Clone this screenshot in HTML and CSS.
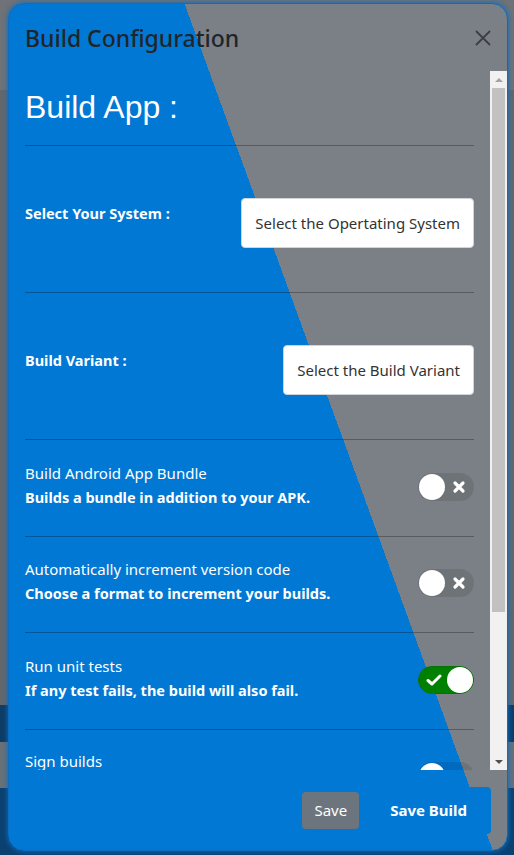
FILE: index.html
```html
<!DOCTYPE html>
<html lang="en">
<head>
<meta charset="utf-8">
<title>Build Configuration</title>
<link rel="stylesheet" href="styles.css">
</head>
<body>
  <div class="modal">
    <div class="modal-header">
      <h4 class="modal-title">Build Configuration</h4>
      <button class="close-btn" aria-label="Close">
        <svg width="16" height="16" viewBox="0 0 16 16"><path d="M1 1L15 15M15 1L1 15" stroke="#3b3f44" stroke-width="1.8" fill="none"/></svg>
      </button>
    </div>
    <div class="modal-body">
      <div class="body-content">
        <h1 class="app-title">Build App :</h1>

        <div class="row select-row">
          <span class="label">Select Your System :</span>
          <div class="select select-os">Select the Opertating System</div>
        </div>

        <div class="row select-row">
          <span class="label">Build Variant :</span>
          <div class="select select-variant">Select the Build Variant</div>
        </div>

        <div class="row toggle-row">
          <div class="text">
            <div class="title">Build Android App Bundle</div>
            <div class="desc">Builds a bundle in addition to your APK.</div>
          </div>
          <div class="toggle off">
            <span class="knob"></span>
            <svg class="icon-x" width="14" height="14" viewBox="0 0 14 14"><path d="M3 3L11 11M11 3L3 11" stroke="#fff" stroke-width="3.2" stroke-linecap="round"/></svg>
          </div>
        </div>

        <div class="row toggle-row">
          <div class="text">
            <div class="title">Automatically increment version code</div>
            <div class="desc">Choose a format to increment your builds.</div>
          </div>
          <div class="toggle off">
            <span class="knob"></span>
            <svg class="icon-x" width="14" height="14" viewBox="0 0 14 14"><path d="M3 3L11 11M11 3L3 11" stroke="#fff" stroke-width="3.2" stroke-linecap="round"/></svg>
          </div>
        </div>

        <div class="row toggle-row">
          <div class="text">
            <div class="title">Run unit tests</div>
            <div class="desc">If any test fails, the build will also fail.</div>
          </div>
          <div class="toggle on">
            <svg class="icon-check" width="16" height="12" viewBox="0 0 16 12"><path d="M2 6.5L6 10L14 2" stroke="#fff" stroke-width="3" fill="none" stroke-linecap="round" stroke-linejoin="round"/></svg>
            <span class="knob"></span>
          </div>
        </div>

        <div class="row toggle-row last-row">
          <div class="text">
            <div class="title">Sign builds</div>
          </div>
          <div class="toggle off">
            <span class="knob"></span>
            <svg class="icon-x" width="14" height="14" viewBox="0 0 14 14"><path d="M3 3L11 11M11 3L3 11" stroke="#fff" stroke-width="3.2" stroke-linecap="round"/></svg>
          </div>
        </div>
      </div>
      <div class="scrollbar" aria-hidden="true">
        <div class="sb-btn">
          <svg width="8" height="4" viewBox="0 0 8 4"><polygon points="0,4 8,4 4,0" fill="#a3a3a3"/></svg>
        </div>
        <div class="sb-track">
          <div class="sb-thumb"></div>
        </div>
        <div class="sb-btn">
          <svg width="8" height="4" viewBox="0 0 8 4"><polygon points="0,0 8,0 4,4" fill="#505050"/></svg>
        </div>
      </div>
    </div>
    <div class="modal-footer">
      <button class="btn btn-save">Save</button>
      <button class="btn btn-build">Save Build</button>
    </div>
  </div>
</body>
</html>
```
FILE: styles.css
```css
* { box-sizing: border-box; }

html, body { margin: 0; padding: 0; }

body {
  width: 514px;
  height: 855px;
  overflow: hidden;
  font-family: "Noto Sans", "Open Sans", sans-serif;
  background: linear-gradient(to bottom,
    #6f7276 0 90px,
    #63676b 90px 705px,
    #0d3d66 705px 742px,
    #687078 742px 788px,
    #0b4170 788px);
}

.modal {
  width: 500px;
  height: 848px;
  margin: 3px 0 0 8px;
  border: 1px solid #0b6cc0;
  border-radius: 16px;
  box-shadow: 0 0 4px 1px rgba(10, 110, 200, 0.8);
  background: linear-gradient(70deg, #0078d4 60%, #7b8086 60%);
  display: flex;
  flex-direction: column;
  overflow: hidden;
}

/* Header */
.modal-header {
  height: 67px;
  flex: none;
  padding: 0 16px;
  display: flex;
  align-items: center;
  justify-content: space-between;
}

.modal-title {
  margin: 0;
  font-size: 23px;
  font-weight: 500;
  color: #212529;
  line-height: 36px;
}

.close-btn {
  width: 16px;
  height: 16px;
  padding: 0;
  border: 0;
  background: transparent;
  display: flex;
}

/* Body */
.modal-body {
  height: 699px;
  flex: none;
  display: flex;
}

.body-content {
  flex: 1;
  min-width: 0;
  overflow: hidden;
  padding: 0 16px;
}

.scrollbar {
  width: 17px;
  flex: none;
  background: #f1f1f1;
  display: flex;
  flex-direction: column;
}

.sb-btn {
  height: 17px;
  flex: none;
  display: flex;
  align-items: center;
  justify-content: center;
}

.sb-track {
  flex: 1;
  padding: 0 2px;
}

.sb-thumb {
  height: 524px;
  background: #c1c1c1;
}

.app-title {
  margin: 0;
  padding: 17px 0 19px;
  font-family: "Liberation Sans", Arial, sans-serif;
  font-size: 32px;
  font-weight: 400;
  line-height: 38px;
  color: #fff;
}

.row {
  display: flex;
  justify-content: space-between;
  align-items: flex-start;
  border-top: 1px solid rgba(0, 0, 0, 0.28);
}

.select-row {
  padding: 52px 0 44px;
}

.label {
  margin-top: 3px;
  font-size: 14.5px;
  font-weight: 700;
  line-height: 24px;
  color: #fff;
}

.select {
  height: 50px;
  padding: 0 13px;
  background: #fff;
  border: 1px solid #ced4da;
  border-radius: 4px;
  display: flex;
  align-items: center;
  font-size: 15px;
  color: #333;
}

.toggle-row {
  padding: 20.5px 0 27px;
}

.last-row {
  padding-top: 19.5px;
}

.text {
  color: #fff;
  font-size: 15px;
  line-height: 24px;
}

.text .desc {
  font-size: 14.5px;
  font-weight: 700;
}

.toggle {
  width: 56px;
  height: 28px;
  margin-top: 12px;
  border-radius: 14px;
  display: flex;
  align-items: center;
  justify-content: space-between;
  flex: none;
}

.last-row .toggle { margin-top: 13px; }

.toggle.off {
  background: rgba(0, 0, 0, 0.1);
  padding: 0 8px 0 1px;
}

.toggle.on {
  background: #008000;
  border: 1px solid #0a6e0a;
  padding: 0 0 0 7px;
}

.knob {
  width: 26px;
  height: 26px;
  border-radius: 50%;
  background: #fff;
  display: block;
}

/* Footer */
.modal-footer {
  flex: 1;
  display: flex;
  justify-content: flex-end;
  align-items: center;
  gap: 7px;
  padding: 0 16px;
}

.btn {
  font-family: "Noto Sans", "Open Sans", sans-serif;
  font-size: 15px;
  color: #fff;
  border: 0;
  border-radius: 4px;
  cursor: pointer;
}

.btn-save {
  height: 37px;
  padding: 0 12px;
  background: #6c757d;
}

.btn-build {
  height: 47px;
  padding: 0 24px;
  background: #0078d4;
  font-weight: 700;
}
```
